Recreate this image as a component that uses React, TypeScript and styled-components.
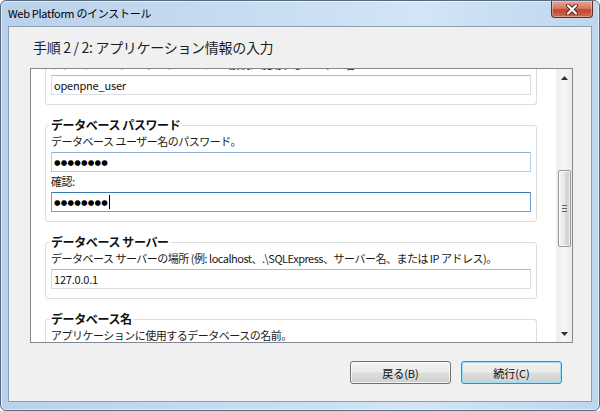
import React, { useLayoutEffect, useRef } from 'react';
import styled, { createGlobalStyle } from 'styled-components';

const font = `"Noto Sans CJK JP", "Noto Sans", sans-serif`;

const GlobalStyle = createGlobalStyle`
  html, body {
    margin: 0;
    padding: 0;
    width: 600px;
    height: 411px;
    overflow: hidden;
    background: #ffffff;
  }
  body {
    font-family: ${font};
    color: #1a1a1a;
  }
`;

const Frame = styled.div`
  box-sizing: border-box;
  width: 600px;
  height: 411px;
  display: flex;
  flex-direction: column;
  padding: 0 7px 8px 7px;
  border: 1px solid #5a6a7e;
  border-radius: 6px;
  background: linear-gradient(90deg, #b9d1ea 0%, #c7dcf1 40%, #d3e5f6 70%, #bed6ee 100%);
  box-shadow: inset 0 0 0 1px rgba(255, 255, 255, 0.55);
`;

const TitleBar = styled.div`
  height: 25px;
  display: flex;
  justify-content: space-between;
  align-items: flex-start;
  flex-shrink: 0;
`;

const TitleText = styled.span`
  margin-top: 4px;
  font-size: 11px;
  letter-spacing: -0.3px;
  line-height: 16px;
  color: #000;
`;

const CloseButton = styled.div`
  width: 42px;
  height: 17px;
  margin-right: -1px;
  box-sizing: border-box;
  display: flex;
  align-items: center;
  justify-content: center;
  border: 1px solid #6b2a1e;
  border-top: none;
  border-radius: 0 0 4px 4px;
  background: linear-gradient(180deg, #e9a795 0%, #d47a66 45%, #c3482f 55%, #d06a4c 100%);
  box-shadow: inset 0 0 0 1px rgba(255, 255, 255, 0.35);
`;

const Client = styled.div`
  flex: 1;
  display: flex;
  flex-direction: column;
  background: #f0f0f0;
  border: 1px solid #8d9fb5;
  padding-bottom: 17px;
`;

const Heading = styled.h1`
  margin: 10px 0 11px 0;
  padding-left: 24px;
  font-size: 14px;
  letter-spacing: -0.3px;
  font-weight: normal;
  line-height: 20px;
  color: #1e1e1e;
`;

const Panel = styled.div`
  margin-left: 21px;
  width: 543px;
  height: 275px;
  box-sizing: border-box;
  border: 1px solid #828790;
  background: #ffffff;
  display: flex;
`;

const Viewport = styled.div`
  flex: 1;
  overflow: hidden;
`;

const Content = styled.div`
  padding: 10px 19px 20px 14px;
  display: flex;
  flex-direction: column;
  gap: 12px;
`;

const Group = styled.fieldset`
  margin: 0;
  padding: 0 5px 9px 5px;
  border: 1px solid #dcdcdc;
  border-radius: 3px;
  display: flex;
  flex-direction: column;
`;

const Legend = styled.legend`
  padding: 0 2px;
  margin-left: -2px;
  font-size: 12px;
  letter-spacing: -0.4px;
  font-weight: bold;
  line-height: 16px;
  color: #111;
`;

const Hint = styled.div`
  font-size: 11px;
  letter-spacing: -0.5px;
  line-height: 16px;
  white-space: nowrap;
  color: #1a1a1a;
`;

const FieldLabel = styled(Hint)`
  margin-top: 1px;
`;

const TextBox = styled.div<{ $state?: 'normal' | 'hover' | 'focus' }>`
  margin-top: 3px;
  height: 20px;
  box-sizing: border-box;
  padding: 0 2px;
  display: flex;
  align-items: center;
  font-size: 11px;
  letter-spacing: -0.2px;
  color: #111;
  border: 1px solid
    ${(p) => (p.$state === 'focus' ? '#6a9fd0' : p.$state === 'hover' ? '#b6cde4' : '#dadee4')};
  border-top-color: ${(p) => (p.$state === 'focus' ? '#3d7bad' : p.$state === 'hover' ? '#8fb1d2' : '#b5b8bd')};
`;

const Dots = styled.span`
  font-family: "DejaVu Sans", sans-serif;
  font-size: 7.5px;
  letter-spacing: 0.2px;
  color: #000;
`;

const Caret = styled.span`
  width: 1px;
  height: 14px;
  margin-left: 1px;
  background: #000;
`;

const ScrollBar = styled.div`
  width: 15px;
  display: flex;
  flex-direction: column;
  align-items: center;
  background: linear-gradient(90deg, #ececec, #f6f6f6 50%, #ececec);
  border-left: 1px solid #f2f2f2;
`;

const Arrow = styled.div`
  height: 17px;
  display: flex;
  align-items: center;
  justify-content: center;
`;

const Track = styled.div`
  flex: 1;
  width: 100%;
  display: flex;
  flex-direction: column;
  align-items: center;
`;

const Thumb = styled.div`
  margin-top: 84px;
  width: 13px;
  height: 77px;
  box-sizing: border-box;
  border: 1px solid #979797;
  border-radius: 2px;
  background: linear-gradient(90deg, #f3f3f3 0%, #e8e8e8 50%, #d8d8d8 51%, #d2d2d2 100%);
  box-shadow: inset 0 0 0 1px rgba(255, 255, 255, 0.7);
  display: flex;
  align-items: center;
  justify-content: center;
`;

const Grip = styled.div`
  width: 5px;
  height: 7px;
  background: repeating-linear-gradient(180deg, #606060 0 1px, transparent 1px 3px);
`;

const ButtonRow = styled.div`
  margin-top: 18px;
  margin-right: 29px;
  display: flex;
  justify-content: flex-end;
  gap: 10px;
`;

const Button = styled.button<{ $default?: boolean }>`
  width: 101px;
  height: 23px;
  padding: 0;
  font-family: ${font};
  font-size: 11px;
  color: #111;
  border: 1px solid ${(p) => (p.$default ? '#3c8ad0' : '#707070')};
  border-radius: 3px;
  background: linear-gradient(180deg, #f2f2f2 0%, #ebebeb 48%, #dddddd 52%, #cfcfcf 100%);
  box-shadow: inset 0 0 0 1px ${(p) => (p.$default ? '#9fdcf8' : 'rgba(255,255,255,0.75)')};
`;

const CloseGlyph = () => (
  <svg width="14" height="11" viewBox="0 0 14 11">
    <path d="M3 1.5 L11 9.5 M11 1.5 L3 9.5" stroke="#5a2016" strokeWidth="4" strokeLinecap="round" />
    <path d="M3 1.5 L11 9.5 M11 1.5 L3 9.5" stroke="#ffffff" strokeWidth="2.2" strokeLinecap="round" />
  </svg>
);

const ArrowGlyph: React.FC<{ up?: boolean }> = ({ up }) => (
  <svg width="7" height="4" viewBox="0 0 7 4">
    <path d={up ? 'M0 4 L3.5 0 L7 4 Z' : 'M0 0 L3.5 4 L7 0 Z'} fill="#303030" />
  </svg>
);

const App: React.FC = () => {
  const viewRef = useRef<HTMLDivElement>(null);

  useLayoutEffect(() => {
    if (viewRef.current) viewRef.current.scrollTop = 39;
  }, []);

  return (
    <>
      <GlobalStyle />
      <Frame>
        <TitleBar>
          <TitleText>Web Platform のインストール</TitleText>
          <CloseButton>
            <CloseGlyph />
          </CloseButton>
        </TitleBar>
        <Client>
          <Heading>手順 2 / 2: アプリケーション情報の入力</Heading>
          <Panel>
            <Viewport ref={viewRef}>
              <Content>
                <Group>
                  <Legend>データベース ユーザー名</Legend>
                  <Hint>アプリケーションがデータベースへの接続に使用するユーザー名</Hint>
                  <TextBox>openpne_user</TextBox>
                </Group>
                <Group>
                  <Legend>データベース パスワード</Legend>
                  <Hint>データベース ユーザー名のパスワード。</Hint>
                  <TextBox $state="hover">
                    <Dots>●●●●●●●●</Dots>
                  </TextBox>
                  <FieldLabel>確認:</FieldLabel>
                  <TextBox $state="focus">
                    <Dots>●●●●●●●●</Dots>
                    <Caret />
                  </TextBox>
                </Group>
                <Group>
                  <Legend>データベース サーバー</Legend>
                  <Hint>
                    データベース サーバーの場所 (例: localhost、.\SQLExpress、サーバー名、または IP アドレス)。
                  </Hint>
                  <TextBox>127.0.0.1</TextBox>
                </Group>
                <Group>
                  <Legend>データベース名</Legend>
                  <Hint>アプリケーションに使用するデータベースの名前。</Hint>
                  <TextBox>openpne</TextBox>
                </Group>
              </Content>
            </Viewport>
            <ScrollBar>
              <Arrow>
                <ArrowGlyph up />
              </Arrow>
              <Track>
                <Thumb>
                  <Grip />
                </Thumb>
              </Track>
              <Arrow>
                <ArrowGlyph />
              </Arrow>
            </ScrollBar>
          </Panel>
          <ButtonRow>
            <Button>戻る(B)</Button>
            <Button $default>続行(C)</Button>
          </ButtonRow>
        </Client>
      </Frame>
    </>
  );
};

export default App;
